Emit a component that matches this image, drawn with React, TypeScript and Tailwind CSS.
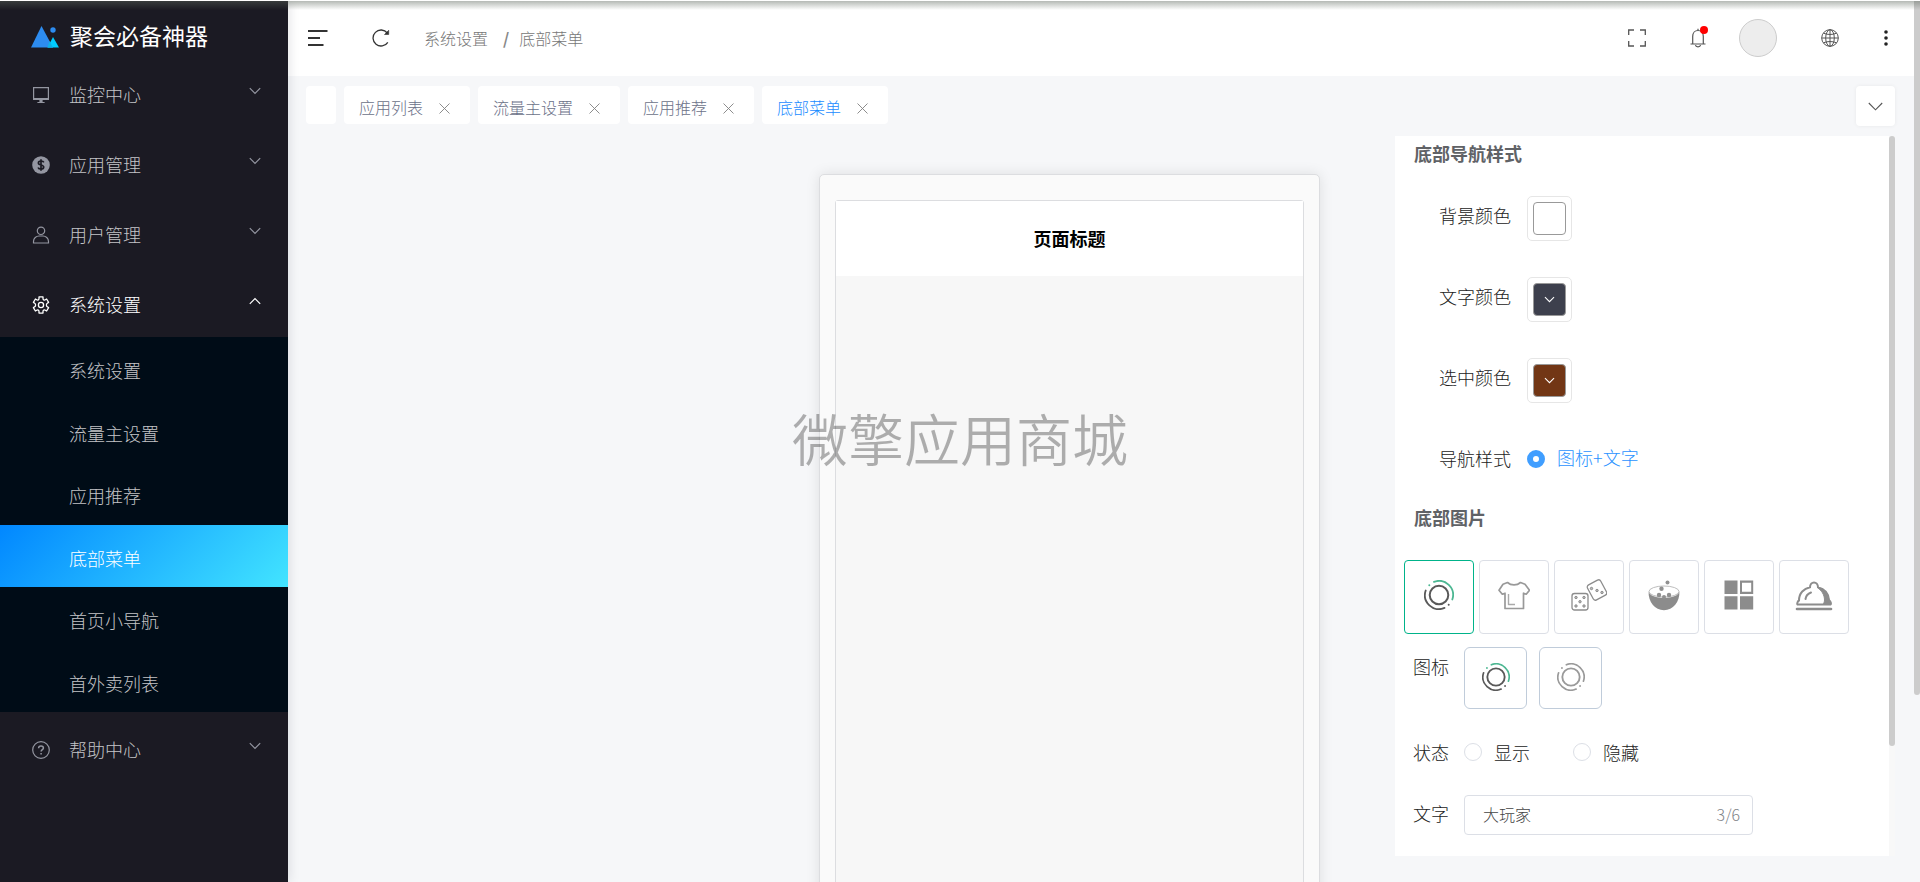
import React, { useState } from "react";

const FONT = "font-['Noto_Sans_CJK_SC',sans-serif]";

const Chevron: React.FC<{ up?: boolean; className?: string }> = ({ up, className }) => (
  <svg viewBox="0 0 12 8" fill="none" stroke="currentColor" strokeWidth="1.2" className={className}>
    <path d={up ? "M0.8 6.8 6 1.5l5.2 5.3" : "M0.8 1.2 6 6.5l5.2-5.3"} />
  </svg>
);

const MonitorIcon = () => (
  <svg viewBox="0 0 18 18" fill="currentColor" className="size-[18px]">
    <path d="M1 1h16v13H1zM2.200 2.200v9.800h13.600V2.200zM7.400 14h3.200v2h2v1H5.400v-1h2z" fillRule="evenodd" />
  </svg>
);

const MoneyIcon = () => (
  <svg viewBox="0 0 18 18" className="size-[18px]">
    <circle cx="9" cy="9" r="8.800" fill="currentColor" />
    <path
      d="M11.800 6.300C11.300 5.200 10.300 5 9 5c-1.500 0-2.600.6-2.600 1.900C6.400 9.600 11.700 8.300 11.700 11c0 1.400-1.200 2-2.700 2-1.400 0-2.500-.4-2.900-1.600M9 3.300v11.400"
      fill="none"
      stroke="#1b1a23"
      strokeWidth="1.700"
    />
  </svg>
);

const UserIcon = () => (
  <svg viewBox="0 0 18 18" fill="none" stroke="currentColor" strokeWidth="1.200" className="size-[18px]">
    <circle cx="9" cy="4.800" r="3.700" />
    <path d="M1.500 17v-1.500c0-3.300 2.800-5.500 5.500-5.500h4c2.700 0 5.500 2.200 5.500 5.500V17z" />
  </svg>
);

const GearIcon = () => (
  <svg viewBox="0 0 18 18" fill="none" stroke="currentColor" strokeWidth="1.300" strokeLinejoin="round" className="size-[18px]">
    <path d="M7 .9h4v1.600c0 1.300 1.200 2 2.300 1.300l1.300-.8 2 3.400-1.300.8c-1.200.7-1.200 2.900 0 3.600l1.300.8-2 3.400-1.300-.8c-1.100-.7-2.300 0-2.300 1.300v1.600H7v-1.600c0-1.300-1.200-2-2.300-1.300l-1.300.8-2-3.400 1.300-.8c1.200-.7 1.200-2.900 0-3.600l-1.300-.8 2-3.400 1.300.8C5.800 4.500 7 3.800 7 2.500z" />
    <circle cx="9" cy="9" r="2.600" />
  </svg>
);

const HelpIcon = () => (
  <svg viewBox="0 0 18 18" fill="none" stroke="currentColor" strokeWidth="1.200" className="size-[18px]">
    <circle cx="9" cy="9" r="8.300" />
    <path d="M6.600 7.200c0-1.300 1-2.200 2.400-2.200s2.400.8 2.400 2c0 1.700-2.300 1.700-2.300 3.600M9.100 12v1.500" strokeWidth="1.500" />
  </svg>
);

const RingIcon: React.FC<{ active?: boolean; className?: string }> = ({ active, className }) => {
  const main = active ? "#595959" : "#9a9a9a";
  const accent = active ? "#4cb792" : "#9a9a9a";
  return (
    <svg viewBox="0 0 30 30" fill="none" strokeWidth="1.800" strokeLinecap="round" className={className}>
      <circle cx="15" cy="15" r="9.300" stroke={main} strokeWidth="2" />
      <path d="M10 1.900A14 14 0 0 1 28.300 19.500" stroke={accent} />
      <path d="M1.700 10.500A14 14 0 0 0 20.500 27.900" stroke={main} />
      <circle cx="5.300" cy="5.300" r="1" fill={accent} />
      <circle cx="24.700" cy="24.700" r="1" fill={main} />
    </svg>
  );
};

const ShirtIcon = () => (
  <svg viewBox="0 0 32 30" fill="none" stroke="#999" strokeWidth="1.700" strokeLinejoin="round" className="h-[30px] w-8">
    <path d="M9.500 2.500 5 4.200 1 10.200l3.300 4 2.700-1V28.500h18.500V13.200l2.700 1 3.300-4-4.500-6-4.500-1.700c-3.500 3.200-9.500 3.200-13 0z" />
    <path d="M10.500 14v10.500h6.500" stroke="#aaa" strokeWidth="1.400" />
  </svg>
);

const DiceIcon = () => (
  <svg viewBox="0 0 36 32" fill="none" stroke="#8c8c8c" strokeWidth="1.300" className="h-8 w-9">
    <rect x="1" y="14.500" width="16" height="16.500" rx="2.500" />
    <rect x="18.500" y="2.500" width="15" height="17" rx="2.500" transform="rotate(-28 26 11)" />
    <g fill="#bbb" strokeWidth="1">
      <circle cx="5" cy="18.500" r="1.200" />
      <circle cx="13" cy="18.500" r="1.200" />
      <circle cx="9" cy="22.700" r="1.200" />
      <circle cx="5" cy="27" r="1.200" />
      <circle cx="13" cy="27" r="1.200" />
      <circle cx="20.500" cy="9.500" r="1.200" />
      <circle cx="26" cy="11.500" r="1.200" />
      <circle cx="31" cy="13.500" r="1.200" />
    </g>
  </svg>
);

const BowlIcon = () => (
  <svg viewBox="0 0 32 31" className="h-[31px] w-8">
    <ellipse cx="16" cy="11.500" rx="15" ry="5.500" fill="#fff" stroke="#b5b5b5" strokeWidth=".9" />
    <path d="M.6 11.500C2 20 30 20 31.400 11.500c.5 10.500-6.400 18.700-15.400 18.700S.1 22 .6 11.500z" fill="#8c8c8c" />
    <g fill="#909090">
      <circle cx="19.500" cy="2.600" r="2" />
      <circle cx="13.500" cy="8.800" r="2.200" />
      <circle cx="11" cy="15" r="2.200" />
      <circle cx="21" cy="15" r="2.200" />
      <circle cx="16" cy="17" r="2" />
    </g>
  </svg>
);

const GridIcon = () => (
  <svg viewBox="0 0 30 30" fill="#8c8c8c" className="size-[30px]">
    <path d="M.5.5h13v13.500H.5zM.5 16.300h13v13.200H.5zM16 16.300h13.200v13.200H16z" />
    <path d="M16 .5h13.200v13.500H16zM18 2.700v9h9.200v-9z" fillRule="evenodd" />
  </svg>
);

const DishIcon = () => (
  <svg viewBox="0 0 38 31" fill="none" stroke="#8c8c8c" strokeWidth="2" strokeLinecap="round" className="h-[31px] w-[38px]">
    <path d="M2.500 24.500C1.500 23.500 3 21 4 20.500 4 13 9 8.500 15 7.300c0-6.500 8-6.500 8 0C29.500 9 33.500 13 34 20c1.500 1 2.500 3.500 1.500 4.500z" />
    <path d="M22.500 7.500c4 3 7 7 7 12.500 0 1.500-.5 3-1.500 4.500h8c0-1.500-.5-3-2-4-.500-7-4.500-11-10-12.500z" fill="#8c8c8c" strokeWidth="1" />
    <path d="M10.500 19c.5-3.500 2.500-5.500 5.500-6.500" />
    <path d="M2 29h34" strokeWidth="2.600" />
  </svg>
);

const menuTop = [
  { label: "监控中心", icon: <MonitorIcon /> },
  { label: "应用管理", icon: <MoneyIcon /> },
  { label: "用户管理", icon: <UserIcon /> },
  { label: "系统设置", icon: <GearIcon />, open: true },
];

const subMenu = ["系统设置", "流量主设置", "应用推荐", "底部菜单", "首页小导航", "首外卖列表"];

const tabs = ["应用列表", "流量主设置", "应用推荐", "底部菜单"];

const iconChoices = [
  { name: "圆环", icon: <RingIcon active className="size-[30px]" /> },
  { name: "服装", icon: <ShirtIcon /> },
  { name: "骰子", icon: <DiceIcon /> },
  { name: "美食", icon: <BowlIcon /> },
  { name: "宫格", icon: <GridIcon /> },
  { name: "餐盘", icon: <DishIcon /> },
];

interface MenuItemProps {
  label: string;
  icon: React.ReactNode;
  open?: boolean;
}

const MenuItem: React.FC<MenuItemProps> = ({ label, icon, open }) => (
  <button
    type="button"
    aria-expanded={!!open}
    className={`flex h-[70px] w-full items-center pt-1.5 pr-[27px] pl-8 ${open ? "text-white" : "text-[#9496a1]"}`}
  >
    {icon}
    <span className={`ml-[19px] flex-1 pb-0.5 text-left text-lg ${open ? "text-white" : "text-[#c4c4c7]"}`}>
      {label}
    </span>
    <Chevron up={open} className="mb-2 h-2 w-3" />
  </button>
);

const Sidebar = () => (
  <aside className="z-10 w-72 shrink-0 bg-[#1b1a23] font-light shadow-[2px_0_10px_rgba(0,21,41,0.1)]">
    <div className="flex h-[57px] items-center gap-[11px] pt-4 pl-[31px]">
      <svg viewBox="0 0 28 22" className="h-[22px] w-7">
        <path d="M10.500 0 22 21.500H0z" fill="#2d8cf0" />
        <path d="M22 11 28 21.500H16.500z" fill="#00cdff" />
        <path d="m18.500 15 3.500 6.500h-5.500z" fill="#0fb0e6" />
        <circle cx="22" cy="4" r="2.700" fill="#2d8cf0" />
      </svg>
      <h1 className="pb-0.5 text-[23px] font-normal text-white">聚会必备神器</h1>
    </div>
    <nav>
      {menuTop.map((item) => (
        <MenuItem key={item.label} {...item} />
      ))}
      <div className="grid h-[375px] grid-rows-6 bg-[#000c17]">
        {subMenu.map((label) => (
          <a
            key={label}
            href="#"
            className={`flex items-center pt-1 pl-[69px] text-lg ${
              label === "底部菜单" ? "bg-[linear-gradient(135deg,#0187ff,#42e4ff)] text-white" : "text-[#c4c4c7]"
            }`}
          >
            {label}
          </a>
        ))}
      </div>
      <MenuItem label="帮助中心" icon={<HelpIcon />} />
    </nav>
  </aside>
);

const Header = () => (
  <header className="flex h-[76px] shrink-0 items-center bg-white pr-8 pl-5 text-[#333]">
    <button type="button" aria-label="收起菜单">
      <svg viewBox="0 0 20 16" fill="currentColor" className="h-4 w-5">
        <path d="M0 0h19.500v2H0zM0 7h12v2H0zM0 14h15.500v2H0z" />
      </svg>
    </button>
    <button type="button" aria-label="刷新" className="ml-11">
      <svg viewBox="0 0 18 18" fill="none" stroke="currentColor" strokeWidth="1.300" className="size-[18px]">
        <path d="M15.800 13.300A8 8 0 1 1 15.300 4" />
        <path d="M12.500 5.500h4.200V1.300z" fill="currentColor" strokeWidth=".6" />
      </svg>
    </button>
    <nav aria-label="面包屑" className="ml-[34px] flex items-center text-base font-light text-[#777]">
      <a href="#">系统设置</a>
      <span className="pr-2.5 pl-[15px] font-bold text-[#888]">/</span>
      <span>底部菜单</span>
    </nav>
    <div className="ml-auto flex items-center text-[#555]">
      <button type="button" aria-label="全屏">
        <svg viewBox="0 0 18 18" fill="none" stroke="currentColor" strokeWidth="1.300" className="size-[18px]">
          <path d="M.7 6V1H6M12 1h5.300v5M17.300 12v5H12M6 17H.7v-5" />
        </svg>
      </button>
      <button type="button" aria-label="通知" className="relative ml-11">
        <svg viewBox="0 0 16 20" fill="none" stroke="currentColor" strokeWidth="1.200" className="h-5 w-4">
          <path d="M2.700 15.500V8.500C2.700 5 5 2.500 8 2.500S13.300 5 13.300 8.500v7M.5 16h15M8 2.500V.8M5.500 17c.3 2.500 4.700 2.500 5 0" />
        </svg>
        <span className="absolute -top-0.5 left-2.5 size-2 rounded-full bg-[#f00]" />
      </button>
      <button
        type="button"
        aria-label="用户"
        className="ml-[33px] size-[38px] rounded-full border border-[#ccc] bg-[#ededed]"
      />
      <button type="button" aria-label="语言" className="ml-11">
        <svg viewBox="0 0 18 18" fill="none" stroke="currentColor" strokeWidth="1" className="size-[18px]">
          <circle cx="9" cy="9" r="8.300" />
          <ellipse cx="9" cy="9" rx="4.300" ry="8.300" />
          <path d="M.7 9h16.600M9 .7v16.600M2.500 4.200c3.500 1.700 9.500 1.700 13 0M2.500 13.800c3.500-1.700 9.500-1.700 13 0" />
        </svg>
      </button>
      <button type="button" aria-label="更多" className="ml-[45px]">
        <svg viewBox="0 0 4 16" fill="#222" className="h-4 w-1">
          <circle cx="2" cy="2" r="1.800" />
          <circle cx="2" cy="8" r="1.800" />
          <circle cx="2" cy="14" r="1.800" />
        </svg>
      </button>
    </div>
  </header>
);

const TabBar = () => (
  <div className="flex items-start gap-2 pt-2.5 pr-[25px] pl-[18px]">
    <div className="h-[38px] w-[30px] rounded bg-white" />
    {tabs.map((tab) => (
      <div
        key={tab}
        className="flex h-[38px] items-center gap-4 rounded bg-white pt-1.5 pr-5 pl-[15px] text-base font-light"
      >
        <a href="#" className={`pb-0.5 ${tab === "底部菜单" ? "text-[#1a8cff]" : "text-[#6b7188]"}`}>
          {tab}
        </a>
        <button type="button" aria-label={`关闭${tab}`} className="text-[#808080]">
          <svg viewBox="0 0 11 11" stroke="currentColor" strokeWidth=".9" className="size-[11px]">
            <path d="m.5.5 10 10M10.500.5l-10 10" />
          </svg>
        </button>
      </div>
    ))}
    <button
      type="button"
      aria-label="更多标签"
      className="ml-auto flex h-10 w-[39px] items-center justify-center rounded bg-white text-[#555] shadow-[0_0_4px_rgba(0,0,0,0.06)]"
    >
      <svg viewBox="0 0 15 9" fill="none" stroke="currentColor" strokeWidth="1.100" className="h-[9px] w-[15px]">
        <path d="m.8 1 6.700 6.800L14.200 1" />
      </svg>
    </button>
  </div>
);

const PhonePreview = () => (
  <div className="mt-[38px] h-[800px] w-[501px] rounded-[5px] border border-[#dcdde0] bg-[#fafafa] px-[15px] pt-[25px] shadow-[0_0_14px_rgba(0,0,0,0.1)]">
    <div className="h-full rounded-[3px] border border-[#dcdde0] bg-[#f7f7f7]">
      <h2 className="flex h-[75px] items-center justify-center bg-white pb-0.5 text-lg font-bold text-black">
        页面标题
      </h2>
    </div>
  </div>
);

const radioClass =
  "size-[18px] appearance-none rounded-full border border-[#dcdfe6] bg-white checked:border-[6px] checked:border-[#409eff]";

const SettingsPanel = () => {
  const [selected, setSelected] = useState("圆环");
  const [text, setText] = useState("大玩家");

  const colors = [
    { label: "背景颜色", swatch: "bg-white" },
    { label: "文字颜色", swatch: "bg-[#3d404d]", arrow: true },
    { label: "选中颜色", swatch: "bg-[#723615]", arrow: true },
  ];

  return (
    <section className="flex shrink-0 self-start bg-[#f8f8f8]">
      <form className="w-[494px] bg-white pt-2 pb-[21px] text-lg leading-6 font-light text-[#222]">
        <h3 className="pb-0.5 pl-[19px] leading-[18px] font-bold text-[#606266]">底部导航样式</h3>
        <div className="mt-8 flex flex-col gap-9 pl-11">
          {colors.map(({ label, swatch, arrow }) => (
            <div key={label} className="flex items-center gap-4">
              <span className="pb-2">{label}</span>
              <button
                type="button"
                aria-label={label}
                className="size-[45px] rounded-[5px] border border-[#e6e6e6] p-[5px]"
              >
                <span
                  className={`flex size-full items-center justify-center rounded-sm border border-[#999] text-white ${swatch}`}
                >
                  {arrow && <Chevron className="h-[7px] w-[11px]" />}
                </span>
              </button>
            </div>
          ))}
        </div>
        <div className="mt-[42px] flex items-center pl-11">
          <span className="pb-0.5">导航样式</span>
          <label className="ml-4 flex items-center gap-3 text-[#2b93ff]">
            <input type="radio" name="navStyle" defaultChecked className={radioClass} />
            <span className="pb-1">图标+文字</span>
          </label>
        </div>
        <h3 className="mt-[35px] pb-0.5 pl-[19px] leading-[18px] font-bold text-[#606266]">底部图片</h3>
        <div className="mt-8 flex gap-[5px] pl-[9px]">
          {iconChoices.map(({ name, icon }) => (
            <button
              key={name}
              type="button"
              aria-label={name}
              onClick={() => setSelected(name)}
              className={`flex h-[74px] w-[70px] items-center justify-center rounded border pb-1 ${
                selected === name ? "border-[#00b38a]" : "border-[#dcdfe6]"
              }`}
            >
              {icon}
            </button>
          ))}
        </div>
        <div className="mt-[13px] flex items-start gap-3 pl-[18px]">
          <span className="mr-[3px] pt-[7px]">图标</span>
          <button
            type="button"
            aria-label="选中图标"
            className="flex h-[62px] w-[63px] items-center justify-center rounded-md border border-[#c0ccda] pb-0.5"
          >
            <RingIcon active className="size-7" />
          </button>
          <button
            type="button"
            aria-label="默认图标"
            className="flex h-[62px] w-[63px] items-center justify-center rounded-md border border-[#c0ccda] pb-0.5"
          >
            <RingIcon className="size-7" />
          </button>
        </div>
        <div className="mt-[31px] flex items-center pl-[18px]">
          <span>状态</span>
          <label className="ml-[15px] flex items-center gap-3">
            <input type="radio" name="status" className={radioClass} />
            显示
          </label>
          <label className="ml-[43px] flex items-center gap-3">
            <input type="radio" name="status" className={radioClass} />
            隐藏
          </label>
        </div>
        <div className="mt-[31px] flex items-center pl-[18px]">
          <label htmlFor="menuText" className="pb-1">
            文字
          </label>
          <div className="ml-[15px] flex h-10 w-[289px] items-center rounded border border-[#dcdfe6] pr-3 pb-0.5 pl-[18px] text-base">
            <input
              id="menuText"
              value={text}
              maxLength={6}
              onChange={(e) => setText(e.target.value)}
              className="min-w-0 flex-1 text-[#444] outline-none"
            />
            <span className="text-[#808388]">{text.length}/6</span>
          </div>
        </div>
      </form>
      <div className="w-1.5">
        <div className="h-[610px] rounded-[3px] bg-[#ccc]" />
      </div>
    </section>
  );
};

const App: React.FC = () => (
  <div className={`relative flex h-screen overflow-hidden bg-[#f6f7f9] ${FONT}`}>
    <Sidebar />
    <main className="flex min-w-0 flex-1 flex-col">
      <Header />
      <TabBar />
      <div className="flex justify-end gap-[75px] pt-2.5 pr-[25px]">
        <PhonePreview />
        <SettingsPanel />
      </div>
    </main>

    {/* watermark */}
    <div className="pointer-events-none absolute inset-0 flex items-center justify-center pb-2 text-[56px] leading-none font-[350] text-black/30">
      微擎应用商城
    </div>

    {/* top edge shadow */}
    <div className="pointer-events-none absolute inset-x-0 top-0 z-20 h-2.5 border-t border-white bg-linear-to-b from-[#5a645a]/45 to-transparent" />

    {/* page scrollbar */}
    <div className="absolute top-0 right-0 h-[695px] w-1.5 rounded-b-[3px] bg-[#ccc]" />
  </div>
);

export default App;
